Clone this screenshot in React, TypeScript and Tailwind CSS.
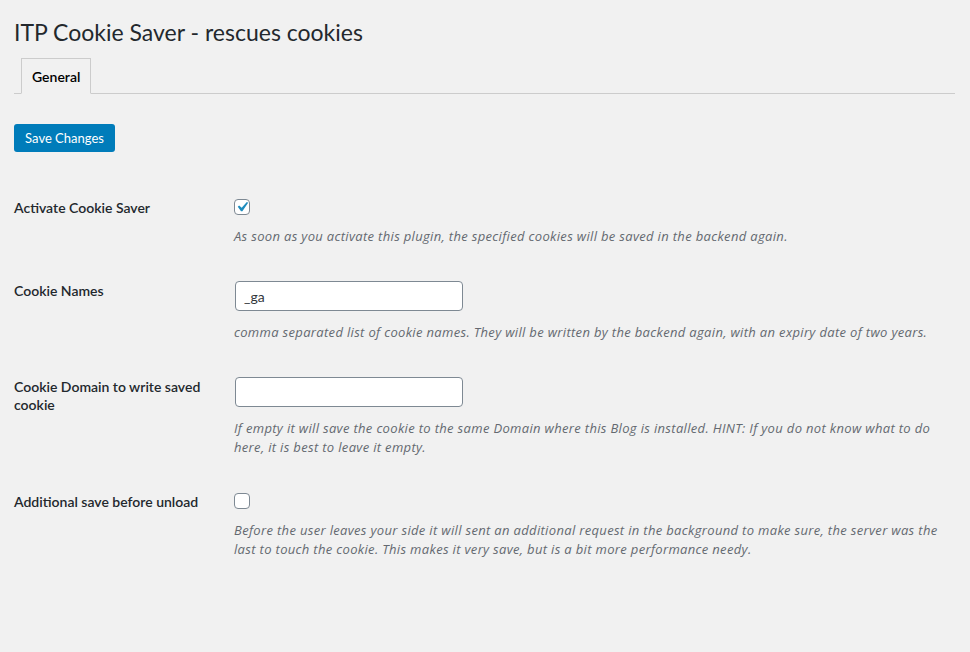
import React from "react";

const font = { fontFamily: "Lato, 'Noto Sans', 'Liberation Sans', sans-serif" };
const descFont = { fontFamily: "'Open Sans', 'Noto Sans', sans-serif" };

function Check({ checked }: { checked: boolean }) {
  return (
    <div className="w-[16px] h-[16px] rounded-[4px] border border-[#7e8993] bg-white flex items-center justify-center">
      {checked && (
        <svg width="20" height="20" viewBox="0 0 20 20" className="shrink-0">
          <path d="M14.83 4.89l1.34.94-5.81 8.38H9.02L5.78 9.67l1.34-1.25 2.57 2.4z" fill="#1e8cbe" />
        </svg>
      )}
    </div>
  );
}

function Desc({ children }: { children: React.ReactNode }) {
  return (
    <p
      className="mt-[12px] text-[13px] italic leading-[19px] tracking-[0.33px] text-[#646970] whitespace-nowrap"
      style={descFont}
    >
      {children}
    </p>
  );
}

export default function App() {
  return (
    <div
      className="min-h-[652px] w-full bg-[#f1f1f1] pl-[14px] pr-[15px] pt-[18px] text-[#23282d]"
      style={font}
    >
      <h1 className="text-[23px] leading-[29px] font-normal text-[#23282d]">
        ITP Cookie Saver - rescues cookies
      </h1>
      <div className="mt-[12px] flex items-end border-b border-[#ccc] h-[35px]">
        <div className="ml-[7px] -mb-px h-[36px] px-[10px] border border-[#ccc] border-b-[#f1f1f1] bg-[#f1f1f1] flex items-center text-[14px] font-semibold text-black">
          General
        </div>
      </div>
      <button className="mt-[30px] h-[28px] w-[101px] rounded-[3px] bg-[#007cba] text-white text-[13px] flex items-center justify-center pt-[1px]">
        Save Changes
      </button>

      <div className="mt-[47px] flex">
        <div className="w-[220px] shrink-0 text-[14px] font-semibold leading-[18px]">Activate Cookie Saver</div>
        <div className="flex flex-col">
          <Check checked />
          <Desc>
            As soon as you activate this plugin, the specified cookies will be saved in the backend again.
          </Desc>
        </div>
      </div>

      <div className="mt-[35px] flex">
        <div className="w-[221px] shrink-0 pt-[1px] text-[14px] font-semibold leading-[18px]">Cookie Names</div>
        <div className="flex flex-col">
          <input
            defaultValue="_ga"
            className="w-[228px] h-[30px] rounded-[4px] border border-[#7e8993] bg-white px-[8px] text-[14px] text-[#32373c] outline-none"
            style={font}
          />
          <div className="-ml-px">
            <Desc>
              comma separated list of cookie names. They will be written by the backend again, with an expiry date of two years.
            </Desc>
          </div>
        </div>
      </div>

      <div className="mt-[35px] flex">
        <div className="w-[221px] shrink-0 pt-[1px] pr-[10px] text-[14px] font-semibold leading-[18px]">
          Cookie Domain to write saved cookie
        </div>
        <div className="flex flex-col">
          <input
            className="w-[228px] h-[30px] rounded-[4px] border border-[#7e8993] bg-white px-[8px] text-[14px] text-[#32373c] outline-none"
            style={font}
          />
          <div className="-ml-px">
            <Desc>
              If empty it will save the cookie to the same Domain where this Blog is installed. HINT: If you do not know what to do
              <br />
              here, it is best to leave it empty.
            </Desc>
          </div>
        </div>
      </div>

      <div className="mt-[36px] flex">
        <div className="w-[220px] shrink-0 text-[14px] font-semibold leading-[18px]">Additional save before unload</div>
        <div className="flex flex-col">
          <Check checked={false} />
          <Desc>
            Before the user leaves your side it will sent an additional request in the background to make sure, the server was the
            <br />
            last to touch the cookie. This makes it very save, but is a bit more performance needy.
          </Desc>
        </div>
      </div>
    </div>
  );
}
